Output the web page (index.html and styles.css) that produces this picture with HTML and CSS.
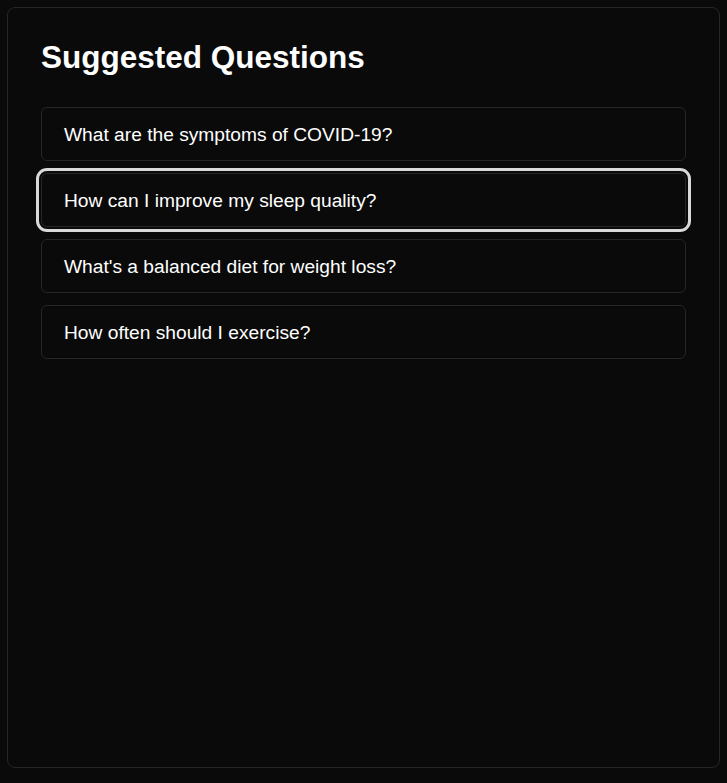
FILE: index.html
```html
<!DOCTYPE html>
<html lang="en">
<head>
<meta charset="utf-8">
<title>Suggested Questions</title>
<link rel="stylesheet" href="styles.css">
</head>
<body>
<section class="card">
  <h2 class="title">Suggested Questions</h2>
  <div class="list">
    <button class="item">What are the symptoms of COVID-19?</button>
    <button class="item item-focus">How can I improve my sleep quality?</button>
    <button class="item">What's a balanced diet for weight loss?</button>
    <button class="item">How often should I exercise?</button>
  </div>
</section>
</body>
</html>
```
FILE: styles.css
```css
html, body {
  margin: 0;
  background: #0a0a0a;
}
body {
  padding: 7px;
  font-family: "Liberation Sans", Arial, sans-serif;
  color: #fafafa;
}
.card {
  box-sizing: border-box;
  height: 761px;
  border: 1px solid #262626;
  border-radius: 8px;
  background: #0a0a0a;
  padding: 31px 33px;
}
.title {
  margin: 0 0 32px;
  font-size: 31.5px;
  line-height: 36px;
  font-weight: 700;
  color: #ffffff;
}
.list {
  display: flex;
  flex-direction: column;
  gap: 12px;
}
.item {
  box-sizing: border-box;
  height: 54px;
  width: 100%;
  text-align: left;
  padding: 1px 22px 0;
  background: #0a0a0a;
  border: 1px solid #262626;
  border-radius: 6px;
  color: #ffffff;
  font-family: "Liberation Sans", Arial, sans-serif;
  font-size: 19.2px;
  line-height: 28px;
}
.item-focus {
  outline: 3px solid #d9d9d9;
  outline-offset: 2px;
}
```
